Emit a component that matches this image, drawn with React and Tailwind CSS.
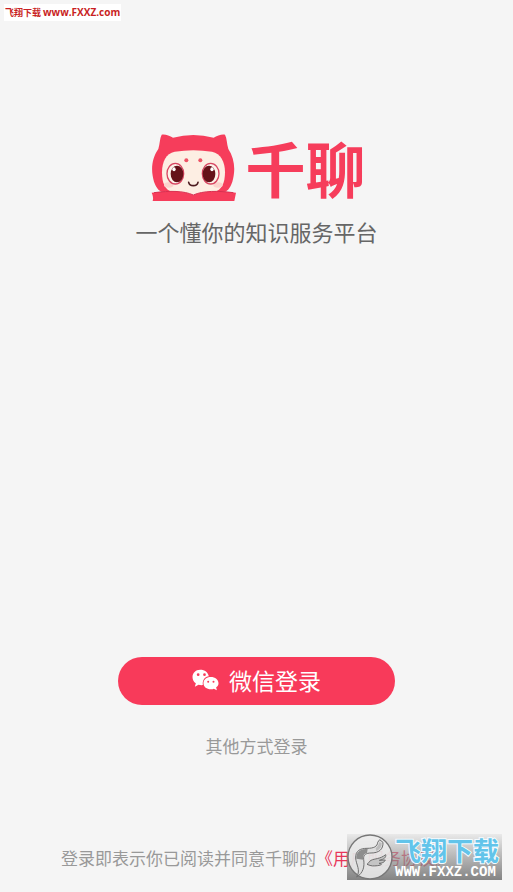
import React from "react";

const Mascot = () => (
  <svg viewBox="35 38 258 207" className="w-[86px] h-[69px] shrink-0" aria-hidden="true">
    <path
      d="M67 43 C75 40 91 46 101 52 Q162 36 223 52 C233 46 249 40 257 43 C263 54 262 70 267 86 C282 108 288 138 283 166 C279 192 270 208 258 214 H66 C54 208 44 192 40 166 C35 138 41 108 57 86 C62 70 61 54 67 43 Z"
      fill="#f63d5b"
    />
    <path
      d="M106 94 Q162 85 218 94 C244 99 257 124 257 156 C257 188 247 211 224 214 L162 222 L100 214 C77 211 68 188 68 156 C68 124 80 99 106 94 Z"
      fill="#fdeee3"
    />
    <ellipse cx="88" cy="194" rx="14" ry="8" fill="#fbd3cd" />
    <ellipse cx="236" cy="194" rx="14" ry="8" fill="#fbd3cd" />
    <circle cx="141" cy="120" r="6" fill="#ee5265" />
    <circle cx="183" cy="120" r="6" fill="#ee5265" />
    <ellipse cx="108" cy="160" rx="25" ry="31" fill="#fdf3ea" stroke="#d84662" strokeWidth="4" />
    <ellipse cx="214" cy="160" rx="25" ry="31" fill="#fdf3ea" stroke="#d84662" strokeWidth="4" />
    <ellipse cx="113" cy="161" rx="19" ry="25" fill="#651219" />
    <ellipse cx="209" cy="161" rx="19" ry="25" fill="#651219" />
    <ellipse cx="104" cy="147" rx="5" ry="6" fill="#fff" />
    <ellipse cx="218" cy="147" rx="5" ry="6" fill="#fff" />
    <path d="M148 186 C151 199 173 199 176 186" fill="none" stroke="#4d1b20" strokeWidth="5" strokeLinecap="round" />
    <path d="M37 217 C82 212 133 211 162 225 C191 211 242 212 290 217 L285 242 H40 C43 233 40 224 37 217 Z" fill="#f63d5b" />
    <path d="M44 217 C92 211 133 211 162 224 C191 211 236 211 282 217" fill="none" stroke="#d92f50" strokeWidth="3" />
  </svg>
);

const WechatIcon = () => (
  <svg viewBox="0 0 80 66" className="w-[27px] h-[22px] shrink-0" aria-hidden="true">
    <path
      d="M24 2 C10 2 1 12 1 24 C1 33 5 39 11 43 L8 53 L19 47 C23 48 28 49 32 48 C30 33 39 22 50 22 C48 10 38 2 24 2 Z"
      fill="#fff"
    />
    <path
      d="M56 24 C43 24 34 32 34 43 C34 54 44 61 56 61 C60 61 63 60 65 59 L74 64 L72 55 C77 52 79 48 79 43 C79 32 69 24 56 24 Z"
      fill="#fff"
    />
    <circle cx="18" cy="17" r="4" fill="#f83a5a" />
    <circle cx="37" cy="17" r="4" fill="#f83a5a" />
    <circle cx="48" cy="38" r="3" fill="#f83a5a" />
    <circle cx="64" cy="38" r="3" fill="#f83a5a" />
  </svg>
);

const SiteLogo = () => (
  <svg viewBox="0 0 138 138" className="w-[46px] h-[46px] shrink-0" aria-hidden="true">
    <circle cx="69" cy="69" r="66" fill="#ededed" fillOpacity="0.85" stroke="#777" strokeWidth="4" />
    <path
      d="M29 129 C42 108 27 92 26 72 C25 50 40 43 60 43 C80 43 91 38 92 25 L98 17 L108 25 C109 46 96 57 72 57 C58 57 48 62 50 76 C53 99 49 116 29 129 Z"
      fill="#dcdcdc"
      stroke="#6f6f6f"
      strokeWidth="3"
    />
    <path d="M36 52 C43 45 54 45 62 45 L60 57 C51 59 47 65 49 77 L28 74 C27 64 30 57 36 52 Z" fill="#8d8d8d" />
    <path d="M86 42 C92 39 95 32 97 24 L104 28 C104 40 98 47 88 51 Z" fill="#bcbcbc" />
    <path
      d="M60 91 C65 88 66 82 72 79 C84 73 98 76 116 62 C118 70 111 76 97 79 L115 78 C112 86 105 87 96 88 C110 89 102 94 91 95 C80 96 74 97 60 91 Z"
      fill="#c4c4c4"
      stroke="#6f6f6f"
      strokeWidth="3"
    />
  </svg>
);

const Watermark = () => (
  <div className="absolute right-[11px] bottom-3 flex items-end bg-linear-to-b from-[#d8d8d8]/40 to-[#777777]/90 pointer-events-none">
    <SiteLogo />
    <div className="flex flex-col pl-[2px] w-[109px]">
      <span className="text-[26px] leading-7 font-bold text-[#62c4ea] whitespace-nowrap [-webkit-text-stroke:2px_#f4fbff] [paint-order:stroke_fill]">
        飞翔下载
      </span>
      <span className="font-['Liberation_Mono',monospace] text-[14px] leading-4 font-bold text-white whitespace-nowrap">
        WWW.FXXZ.COM
      </span>
    </div>
  </div>
);

const App = () => {
  return (
    <div className="relative flex flex-col items-center min-h-screen bg-[#f5f5f5] font-['Noto_Sans_CJK_SC',sans-serif]">
      <div className="self-start mt-1 ml-1 px-px bg-white text-[9px] leading-4 font-bold text-[#c91f24] whitespace-nowrap">
        飞翔下载{" "}
        <span className="font-['Open_Sans','Liberation_Sans',sans-serif] text-[10px]">www.FXXZ.com</span>
      </div>

      <header className="flex flex-col items-center mt-[110px]">
        <div className="flex items-center gap-2 pl-1">
          <Mascot />
          <h1 className="text-[60px] leading-[72px] font-bold text-[#f63d5b]">千聊</h1>
        </div>
        <p className="mt-3 text-[22px] leading-8 text-[#666666]">一个懂你的知识服务平台</p>
      </header>

      <main className="flex flex-col items-center w-full mt-auto">
        <button
          type="button"
          className="flex items-center justify-center gap-[10px] w-[54%] h-12 pb-[2px] rounded-full bg-[#f83a5a] text-[23px] text-white"
        >
          <WechatIcon />
          微信登录
        </button>
        <button type="button" className="mt-[27px] text-[17px] leading-7 text-[#999999]">
          其他方式登录
        </button>
      </main>

      <footer className="mt-[84px] mb-5 text-[17px] leading-7 text-[#999999] whitespace-nowrap">
        登录即表示你已阅读并同意千聊的
        <a href="#agreement" className="text-[#e8365a]">《用户服务协议》</a>
      </footer>

      <Watermark />
    </div>
  );
};

export default App;
